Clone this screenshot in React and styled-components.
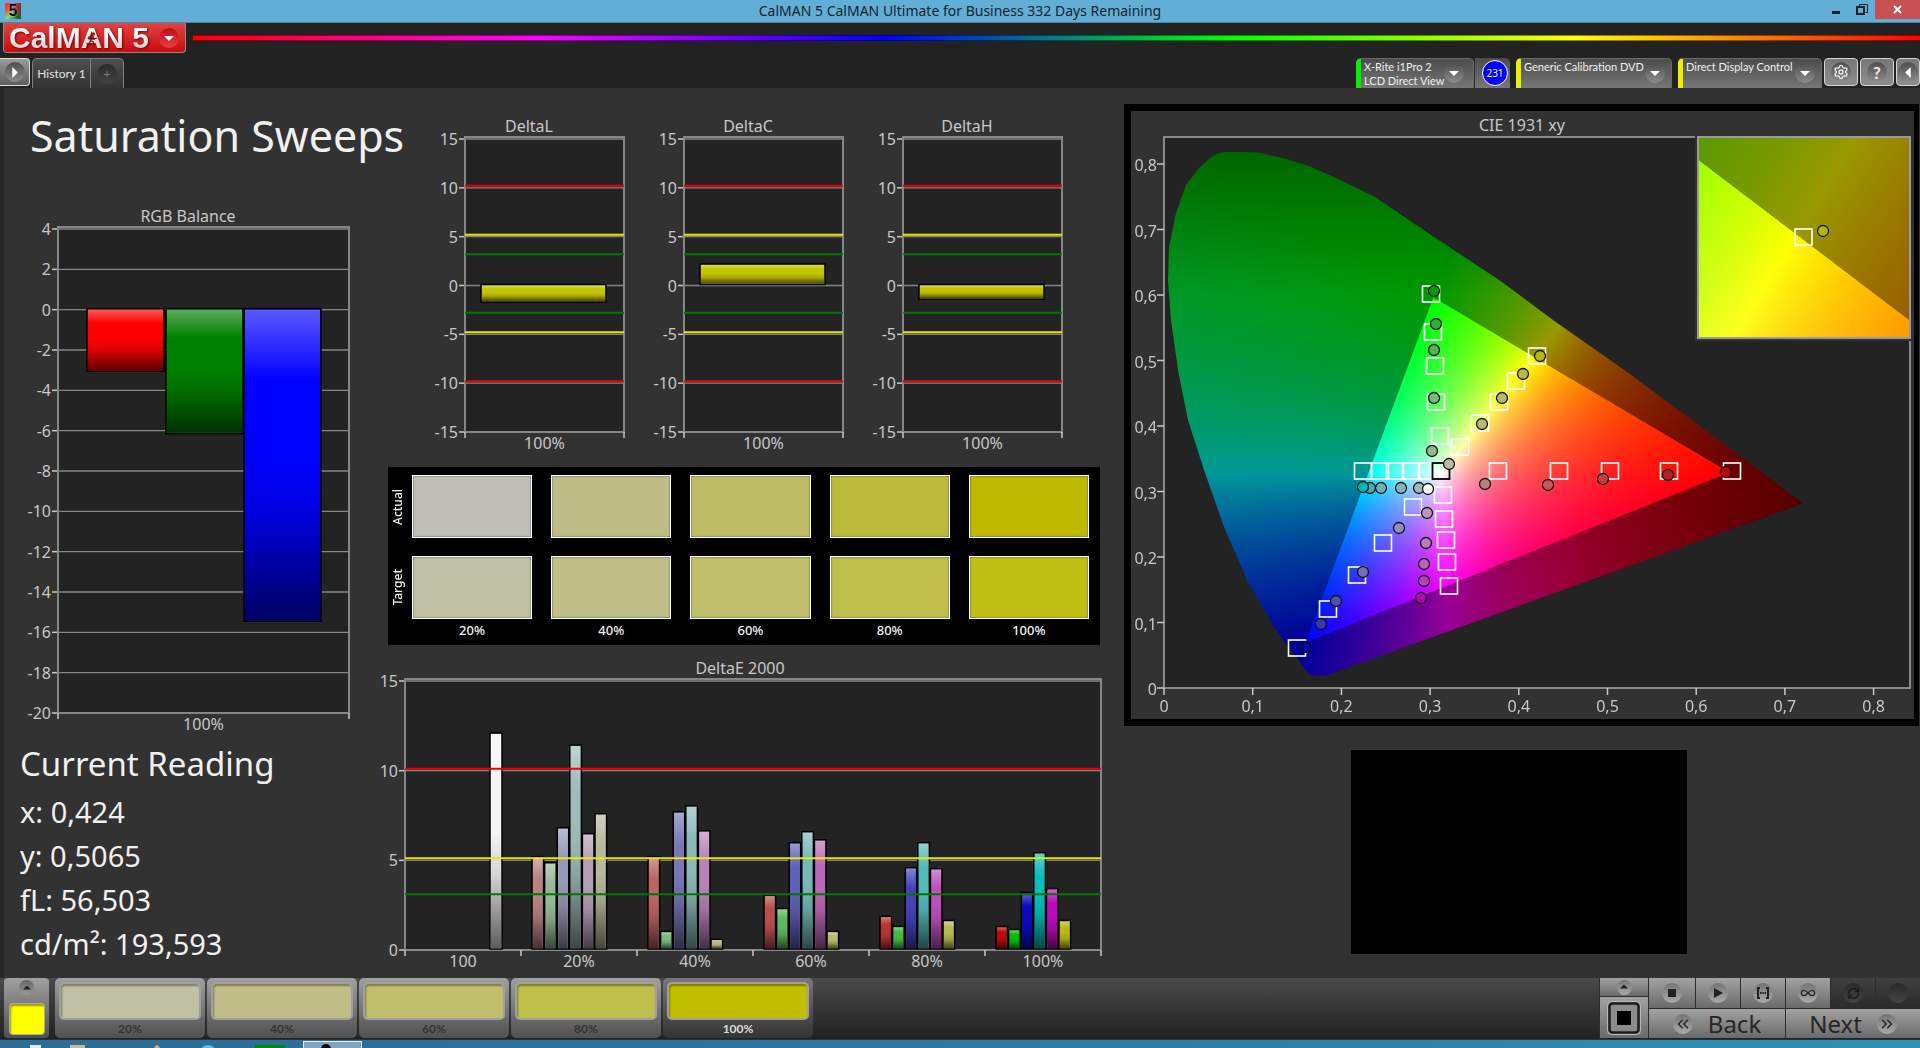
import React, {useEffect, useRef} from 'react';
import styled, {createGlobalStyle} from 'styled-components';
import {ChevronsLeft, ChevronsRight, Infinity as Loop, RefreshCw, Settings} from 'lucide-react';

const GlobalStyle = createGlobalStyle`
  *,
  *::before {
    box-sizing: border-box;
  }

  body {
    margin: 0;
    background: #323232;
    color: #f0f0f0;
    font-family: 'Noto Sans', 'Open Sans', sans-serif;
  }

  button {
    padding: 0;
    border: 0;
    color: inherit;
    font: inherit;
    font-family: Lato, sans-serif;
    cursor: pointer;
  }
`;

const Page = styled.div`
  display: flex;
  flex-direction: column;
  min-height: 100vh;
  overflow: hidden;
`;

/* ---------- window title ---------- */

const TitleBar = styled.div`
  display: grid;
  grid-template-columns: 1fr auto 1fr;
  align-items: center;
  height: 23px;
  background: #61aed6;
  border-bottom: 1px solid #4a87a6;
  color: #16242c;
  font: 14px/22px 'Noto Sans', sans-serif;
`;

const AppIcon = styled.span`
  display: block;
  width: 16px;
  height: 16px;
  margin-left: 5px;
  background: conic-gradient(#e02050, #803020, #206030, #70e080, #ff4030, #e02050);
  color: #000;
  font: bold 16px/16px 'Liberation Sans', sans-serif;
  text-align: center;
  text-shadow: 0 0 2px #fff;
`;

const WindowButtons = styled.div`
  display: flex;
  justify-content: flex-end;
  align-self: start;
`;

const WindowButton = styled.button`
  display: grid;
  place-items: center;
  width: ${({$close}) => ($close ? '45px' : '26px')};
  height: 19px;
  background: ${({$close}) => ($close ? '#c75050' : 'transparent')};
`;

/* ---------- header ---------- */

const Header = styled.header`
  height: 65px;
  background: #222;
`;

const Brand = styled.div`
  display: flex;
  align-items: flex-start;
`;

const Logo = styled.button`
  display: flex;
  flex: none;
  align-items: center;
  gap: 10px;
  width: 183px;
  height: 30px;
  margin-left: 3px;
  padding-left: 5px;
  background: linear-gradient(#e04444, #c80c0c);
  border: 1px solid #8d8d8d;
  border-top: 0;
  border-radius: 0 0 4px 4px;
`;

const Wordmark = styled.span`
  position: relative;
  filter: drop-shadow(1px 1px 1px #7a0000);
`;

const WordmarkText = styled.span`
  background: linear-gradient(#fff 30%, #c4c4c4);
  background-clip: text;
  color: transparent;
  font: bold 30px/28px 'Liberation Sans', sans-serif;
  white-space: nowrap;
`;

const Runner = styled.svg`
  position: absolute;
  left: 77px;
  top: 8px;
`;

const Knob = styled.span`
  display: grid;
  flex: none;
  place-items: center;
  width: 20px;
  height: 20px;
  border-radius: 50%;
  background: ${({$tone}) => $tone || 'linear-gradient(#4e4e4e, #8c8c8c)'};
`;

const Spectrum = styled.div`
  flex: 1;
  height: 6px;
  margin: 12px 0 0 7px;
  background: linear-gradient(90deg, #f00, #f0f 20%, #00f 40%, #0f0 60%, #ff0 80%, #f00);
  border: solid rgba(0, 0, 0, 0.45);
  border-width: 1px 0;
`;

const Bar = styled.div`
  display: flex;
  justify-content: space-between;
  margin-top: 5px;
`;

const Group = styled.div`
  display: flex;
  align-items: flex-start;
`;

const Expander = styled.button`
  display: grid;
  place-items: center;
  width: 30px;
  height: 28px;
  margin-right: 2px;
  background: linear-gradient(#9a9a9a, #5e5e5e);
  border: 1px solid #ddd;
  border-left: 0;
  border-radius: 0 4px 4px 0;
`;

const Tab = styled.button`
  display: grid;
  place-items: center;
  width: ${({$add}) => ($add ? '33px' : '59px')};
  height: 30px;
  background: linear-gradient(#4e4e4e, #333);
  border: solid #808080;
  border-width: ${({$add}) => ($add ? '1px 1px 0 0' : '1px 1px 0 1px')};
  border-radius: ${({$add}) => ($add ? '0 5px 0 0' : '5px 0 0 0')};
  color: ${({$add}) => ($add ? '#808080' : '#e4e4e4')};
  font-size: 12px;
`;

const Device = styled.button`
  display: flex;
  align-items: flex-start;
  justify-content: space-between;
  width: ${({$width}) => $width};
  height: 30px;
  margin-left: 6px;
  padding: 1px ${({$end}) => $end || '6px'} 0 3px;
  background: linear-gradient(#4c4c4c, #777);
  border: 1px solid #6a6a6a;
  border-bottom: 0;
  border-left: 5px solid ${({$status}) => $status};
  border-radius: 5px 5px 0 0;
  font-size: 11px;
  line-height: 14px;
  text-align: left;
  white-space: nowrap;

  ${Knob} {
    margin-top: 3px;
  }
`;

const ReadingCount = styled.span`
  display: grid;
  place-items: center;
  width: 26px;
  height: 26px;
  border: 1px solid #fff;
  border-radius: 50%;
  background: #00f;
  font-size: 10px;
`;

const CountSlot = styled.div`
  width: 36px;
  height: 30px;
  padding: 2px 0 0 7px;
  background: linear-gradient(#4c4c4c, #777);
  border-left: 1px solid #2a2a2a;
  border-radius: 0 5px 0 0;
`;

const Square = styled.button`
  display: grid;
  place-items: center;
  width: ${({$cut}) => ($cut ? '24px' : '34px')};
  height: 28px;
  margin-left: 2px;
  background: linear-gradient(#777, #8e8e8e);
  border: 1px solid #d6d6d6;
  border-radius: 4px;
  font-size: 17px;
  font-weight: bold;
`;

/* ---------- workspace ---------- */

const Workspace = styled.main`
  display: grid;
  flex: 1;
  grid-template-columns: 368fr 752fr 796fr;
  align-items: start;
  border-left: 4px solid #262626;
`;

const Column = styled.section`
  min-width: 0;
`;

const Heading = styled.h1`
  margin: 20px 0 41px 26px;
  font-size: 43px;
  font-weight: 400;
  line-height: 56px;
  white-space: nowrap;
`;

const Reading = styled.div`
  margin: 2px 0 0 16px;
  font-size: 29px;
  line-height: 44px;

  h2 {
    margin: 0 0 4px;
    font-size: 33px;
    font-weight: 400;
    line-height: 44px;
  }

  p {
    margin: 0;
  }
`;

const Chart = styled.svg`
  display: block;
  width: 100%;
  height: auto;
  fill: #c8c8c8;
  font-size: 16px;
`;

const DeltaRow = styled.div`
  display: grid;
  grid-template-columns: repeat(3, 1fr);
  padding: 27px 55px 0 40px;
`;

const Comparison = styled.div`
  display: grid;
  grid-template-columns: 24px 120fr repeat(4, 139fr);
  row-gap: 18px;
  margin: 7px 24px 5px 16px;
  padding: 8px 11px 6px 0;
  background: #000;
`;

const RowName = styled.span`
  place-self: center;
  margin-right: 5px;
  font-size: 12px;
  font-weight: 500;
  line-height: 14px;
  transform: rotate(180deg);
  writing-mode: vertical-rl;
`;

const Patch = styled.div`
  height: 63px;
  margin-left: ${({$first}) => ($first ? '0' : '19px')};
  background: ${({$color}) => $color};
  border: 1px solid #fff;
  box-shadow: inset 0 0 1px 1px rgba(80, 80, 60, 0.35);
`;

const PatchName = styled.span`
  margin: -16px 0 0 ${({$first}) => ($first ? '0' : '19px')};
  font-size: 13px;
  font-weight: 500;
  line-height: 18px;
  text-align: center;
`;

const GamutFrame = styled.div`
  margin: 16px 1px 0 0;
  border: 7px solid #000;
  border-right-width: 5px;
`;

const Gamut = styled.canvas`
  display: block;
  width: 100%;
  height: 100%;
`;

const Preview = styled.div`
  width: 336px;
  height: 204px;
  margin: 24px 233px 0 auto;
  background: #000;
`;

/* ---------- footer ---------- */

const Footer = styled.footer`
  display: flex;
  justify-content: space-between;
  height: 61px;
  padding-left: 4px;
  background: linear-gradient(#4a4a4a, #212121);
`;

const Strip = styled.div`
  display: flex;
  gap: 2px;
`;

const PickedColor = styled.button`
  display: flex;
  flex-direction: column;
  align-items: center;
  justify-content: space-between;
  width: 45px;
  height: 60px;
  margin-right: 4px;
  padding: 2px 0 3px;
  background: linear-gradient(#a0a0a0, #505050);
  border-radius: 4px;

  ${Knob} {
    width: 15px;
    height: 15px;
  }
`;

const Chip = styled.span`
  width: 36px;
  height: 32px;
  background: #ff0;
  border: 1px solid #aaa;
  border-radius: 4px;
  box-shadow: inset 1px 2px 2px rgba(0, 0, 0, 0.4);
`;

const Level = styled.button`
  display: flex;
  flex-direction: column;
  width: 150px;
  height: 60px;
  padding: 4px 4px 0;
  background: ${({$active}) => ($active ? 'linear-gradient(#787878, #333)' : 'linear-gradient(#a0a0a0, #505050)')};
  border-radius: 5px;
  color: ${({$active}) => ($active ? '#ddd' : '#343434')};
  font-size: 12px;
  font-weight: 700;
  text-align: center;

  &::before {
    content: '';
    width: 100%;
    height: 38px;
    background: ${({$color}) => $color};
    border: 2px solid #a0a0a0;
    border-radius: 5px;
    box-shadow: inset 1px 2px 2px rgba(0, 0, 0, 0.35);
  }
`;

const LevelName = styled.span`
  width: 100%;
  line-height: 18px;
`;

const Controls = styled.div`
  display: grid;
  grid-template-columns: 48px 46px repeat(5, 44px);
  grid-template-rows: 30px 29px;
  gap: 1px;
  height: 60px;
  padding-left: 1px;
  background: #2c2c2c;
`;

const Key = styled.button`
  display: flex;
  align-items: center;
  justify-content: center;
  grid-column: span ${({$span}) => $span || 1};
  gap: ${({$span}) => ($span ? '15px' : '0')};
  background: ${({$off}) => ($off ? 'linear-gradient(#404040, #2b2b2b)' : 'linear-gradient(#a2a2a2, #6a6a6a)')};
  color: ${({$off}) => ($off ? '#1c1c1c' : '#262626')};
  font: 24px/28px 'Noto Sans', sans-serif;
`;

const Dial = styled(Knob).attrs(({$off}) => ({
  $tone: $off ? 'linear-gradient(#2a2a2a, #444)' : 'linear-gradient(#747474, #aaa)',
}))``;

const SourceStack = styled.div`
  display: flex;
  flex-direction: column;
  grid-row: span 2;
  gap: 1px;
`;

const SourceKey = styled(Key)`
  flex: ${({$grow}) => ($grow ? 1 : 'none')};
  height: ${({$grow}) => ($grow ? 'auto' : '18px')};

  ${Dial} {
    width: 15px;
    height: 15px;
  }
`;

const TaskBar = styled.div`
  display: flex;
  gap: 13px;
  height: 9px;
  padding-left: 30px;
  overflow: hidden;
  background: linear-gradient(90deg, #2c6c98, #2b73a3 40%, #3090b6);
  border-top: 1px solid #24323c;
`;

const Task = styled.span`
  width: ${({$width}) => $width};
  height: 20px;
  margin: 5px 0 0 ${({$indent}) => $indent || 0};
  background: ${({$color}) => $color};
  border-radius: ${({$round}) => ($round ? '50%' : '0')};
`;

const ActiveTask = styled.span`
  width: 59px;
  height: 20px;
  margin: 1px 0 0 5px;
  padding: 2px 0 0 17px;
  background: #7fa5be;
  border: 1px solid #e8f4ff;

  &::before {
    content: '';
    display: block;
    width: 10px;
    height: 14px;
    background: #120505;
    border-radius: 5px;
  }
`;

/* ---------- bar charts ---------- */

const BarShade = () => (
  <defs>
    <linearGradient id="bar-shade" x1="0" y1="0" x2="0" y2="1">
      <stop offset="0" stopColor="#fff" stopOpacity="0.35" />
      <stop offset="0.23" stopColor="#fff" stopOpacity="0" />
      <stop offset="0.45" stopColor="#000" stopOpacity="0" />
      <stop offset="0.65" stopColor="#000" stopOpacity="0.12" />
      <stop offset="1" stopColor="#000" stopOpacity="0.62" />
    </linearGradient>
  </defs>
);

const limits = [
  {value: 10, color: '#f00000'},
  {value: 5, color: '#e8e800'},
  {value: 3, color: '#007800'},
];

const BarChart = ({title, titleX, size, plot, max, min, step, bars, lines = [], categories}) => {
  const [width, height] = size;
  const bottom = plot.y + plot.h;
  const toY = value => plot.y + 2 + ((max - value) / (max - min)) * (plot.h - 2);
  const slot = plot.w / categories.length;
  const ticks = [];
  for (let v = max; v >= min; v -= step) ticks.push(v);

  return (
    <Chart viewBox={`0 0 ${width} ${height}`} role="img" aria-label={title}>
      <BarShade />
      <text x={titleX} y={plot.y - 5} textAnchor="middle">{title}</text>
      <rect x={plot.x} y={plot.y} width={plot.w} height={plot.h} fill="#232323" />
      {ticks.map(v => (
        <g key={v}>
          <line x1={plot.x} x2={plot.x + plot.w} y1={toY(v)} y2={toY(v)} stroke="#868686" strokeWidth="1.4" />
          <line x1={plot.x - 6} x2={plot.x} y1={toY(v)} y2={toY(v)} stroke="#c8c8c8" strokeWidth="1.5" />
          <text x={plot.x - 7} y={toY(v) + 6} textAnchor="end">{v}</text>
        </g>
      ))}
      <rect x={plot.x} y={plot.y} width={plot.w} height={plot.h} fill="none" stroke="#868686" strokeWidth="2" />
      {bars.map(({x, w, value, color}) => {
        const y = toY(Math.max(0, value)) - 1;
        const h = Math.abs(toY(value) - toY(0));
        return (
          <g key={x}>
            <rect x={x} y={y} width={w} height={h} fill={color} stroke="#000" strokeWidth="1.5" />
            <rect x={x + 1} y={y + 1} width={w - 2} height={Math.max(h - 2, 1)} fill="url(#bar-shade)" />
          </g>
        );
      })}
      {lines.map(({value, color}) => (
        <line key={value} x1={plot.x} x2={plot.x + plot.w} y1={toY(value) - 2} y2={toY(value) - 2} stroke={color} strokeWidth="2" />
      ))}
      {categories.map((name, i) => (
        <text key={name} x={plot.x + slot * (i + 0.5)} y={bottom + 17} textAnchor="middle">{name}</text>
      ))}
      {[...categories, ''].map((name, i) => (
        <line key={name} x1={plot.x + slot * i} x2={plot.x + slot * i} y1={bottom} y2={bottom + 6} stroke="#c8c8c8" strokeWidth="1.5" />
      ))}
    </Chart>
  );
};

const rgbBars = [
  {x: 83, w: 77, value: -3.1, color: '#ff0000'},
  {x: 162, w: 77, value: -6.2, color: '#008000'},
  {x: 240, w: 77, value: -15.5, color: '#0000ff'},
];

const deltas = [
  {title: 'DeltaL', value: -1.8},
  {title: 'DeltaC', value: 2.1},
  {title: 'DeltaH', value: -1.5},
];

const deltaE = [
  {
    values: [5.15, 4.81, 6.76, 11.37, 6.43, 7.54],
    colors: ['#b98383', '#98b898', '#9898b9', '#9fb8b8', '#b89fb8', '#b8b89b'],
  },
  {
    values: [5.15, 0.98, 7.65, 7.98, 6.59, 0.54],
    colors: ['#bb6464', '#7cb87c', '#7878b9', '#8cb8b8', '#b983b9', '#b9b985'],
  },
  {
    values: [3, 2.26, 5.93, 6.54, 6.09, 0.98],
    colors: ['#ba4d4d', '#5fb95f', '#6060b9', '#76b9b9', '#ba69b9', '#b9b96b'],
  },
  {
    values: [1.83, 1.26, 4.54, 5.93, 4.48, 1.59],
    colors: ['#bb3434', '#45b945', '#4444b9', '#56b9b9', '#ba50ba', '#b9b950'],
  },
  {
    values: [1.26, 1.09, 3.15, 5.37, 3.37, 1.59],
    colors: ['#bb0a0a', '#0abb0a', '#0a0abb', '#0abbbb', '#bb0abb', '#b9b910'],
  },
];

const deltaEBars = [
  {x: 118, w: 12, value: 12.04, color: '#f4f4f6'},
  ...deltaE.flatMap(({values, colors}, group) =>
    values.map((value, i) => ({x: 160 + group * 116 + i * 12.6, w: 11.6, value, color: colors[i]}))
  ),
];

/* ---------- chromaticity diagram ---------- */

const primaries = [[0.637, 0.3295], [0.3034, 0.5967], [0.1595, 0.07]];
const white = [0.3127, 0.329];

const det = (a, b, c) =>
  a[0] * (b[1] * c[2] - b[2] * c[1]) - b[0] * (a[1] * c[2] - a[2] * c[1]) + c[0] * (a[1] * b[2] - a[2] * b[1]);

const solve = ([r, g, b], v) => {
  const d = det(r, g, b);
  return [det(v, g, b) / d, det(r, v, b) / d, det(r, g, v) / d];
};

const toVector = ([x, y]) => [x, y, 1 - x - y];
const vectors = primaries.map(toVector);
const whiteWeights = solve(vectors, toVector(white));

const clamp = v => Math.min(1, Math.max(0, v));

// full brightness inside the triangle, dimmed towards the ends of the locus
const colorAt = (x, y) => {
  const rgb = solve(vectors, [x, y, 1 - x - y]).map((v, i) => v / whiteWeights[i]);
  const outside = rgb.some(v => v < 0);
  const top = Math.max(...rgb);
  const dim = outside ? 0.6 - 0.27 * clamp((x - 0.45) / 0.27) - 0.2 * clamp((y - 0.6) / 0.22) : 1;
  return rgb.map(v => 255 * dim * clamp(v / top));
};

const locus = 'M146 538.5 L132 520 L124 510 L109 488 L83 443 L60 390 L40 333 L24 283 L14.5 236 L7 183 L4 143 ' +
  'L5 110 L12 76 L22 48 L35 31 L44 23 Q52 15.5 62 15 L76 15 L94 15.5 L119 21 L145 29 L170 40 L211 60 L264 96 ' +
  'L338 145 L389 183 L466 237 L540 292 L639 366.5 L162 538.5 Z';

const paint = (canvas, {x0, x1, y0, y1, outline}) => {
  const {width, height} = canvas;
  const ctx = canvas.getContext('2d');
  const image = ctx.createImageData(width, height);
  for (let row = 0; row < height; row += 1) {
    for (let col = 0; col < width; col += 1) {
      const [r, g, b] = colorAt(x0 + ((x1 - x0) * col) / width, y1 - ((y1 - y0) * row) / height);
      const at = (row * width + col) * 4;
      image.data[at] = r;
      image.data[at + 1] = g;
      image.data[at + 2] = b;
      image.data[at + 3] = 255;
    }
  }
  ctx.putImageData(image, 0, 0);
  if (outline) {
    ctx.globalCompositeOperation = 'destination-in';
    ctx.setTransform(2, 0, 0, 2, 0, 0);
    ctx.fill(new Path2D(outline));
  }
};

const GamutCanvas = ({width, height, area}) => {
  const ref = useRef(null);

  useEffect(() => {
    paint(ref.current, area);
  }, [area]);

  return <Gamut ref={ref} width={width * 2} height={height * 2} />;
};

const fullArea = {x0: 0, x1: 746 / 887, y0: 0, y1: 551 / 655, outline: locus};
const zoomArea = {x0: 0.3847, x1: 0.4547, y0: 0.4695, y1: 0.5395};

const targets = [
  [267, 157], [269, 195], [271, 229], [272, 265], [276, 299],
  [373, 219], [352, 244], [335, 265], [316, 286], [296, 310],
  [199, 334], [216, 334], [231, 334], [247, 334], [263, 334],
  [334, 334], [395, 334], [446, 334], [505, 334], [568, 334],
  [249, 370], [219, 406], [193, 438], [164, 472], [133, 511],
  [279, 358], [280, 382], [282, 403], [283, 425], [285, 449],
];

const readings = [
  [270, 154, '#00a000'], [272, 187, '#3aa83a'], [270, 213, '#58b058'], [270, 261, '#78b878'], [268, 314, '#94b894'],
  [376, 219, '#b8b800'], [359, 237, '#b8b848'], [338, 261, '#b8b868'], [318, 287, '#b8b880'], [285, 327, '#b8b8a0'],
  [206, 351, '#40b0b0'], [199, 350, '#00b8b8'], [217, 351, '#68b4b4'], [237, 351, '#80b8b8'], [255, 351, '#a0b8b8'],
  [264, 352, '#ffffff'],
  [321, 347, '#b88080'], [384, 348, '#c05858'], [439, 342, '#c04040'], [504, 338, '#b82020'], [562, 335, '#c00000'],
  [235, 391, '#9090b8'], [199, 435, '#7070b8'], [172, 464, '#5050b0'], [157, 487, '#3838b0'], [141, 510, '#0000a8'],
  [263, 376, '#b898b8'], [262, 406, '#b880b8'], [260, 427, '#b860b8'], [260, 444, '#b840b8'], [257, 461, '#b800b8'],
];

const tenths = [0, 1, 2, 3, 4, 5, 6, 7, 8];
const decimal = n => (n ? `0,${n}` : '0');

const GamutChart = () => (
  <Chart viewBox="0 0 783 608" role="img" aria-label="CIE 1931 xy">
    <text x="391" y="20" textAnchor="middle">CIE 1931 xy</text>
    <g transform="translate(33 26)">
      <rect width="746" height="551" fill="#232323" stroke="#8a8a8a" strokeWidth="2" />
      <foreignObject width="746" height="551">
        <GamutCanvas width={746} height={551} area={fullArea} />
      </foreignObject>
      {tenths.map(n => (
        <g key={n} stroke="#c8c8c8" strokeWidth="1.5">
          <line x1={n * 88.7} x2={n * 88.7} y1="551" y2="558" />
          <line x1="-7" x2="0" y1={551 - n * 65.5} y2={551 - n * 65.5} />
        </g>
      ))}
      {tenths.map(n => (
        <g key={n}>
          <text x={n * 88.7} y="575" textAnchor="middle">{decimal(n)}</text>
          <text x="-7" y={558 - n * 65.5} textAnchor="end">{decimal(n)}</text>
        </g>
      ))}
      {targets.map(([x, y]) => (
        <rect key={`${x}-${y}`} x={x - 8.5} y={y - 8} width="17" height="16" fill="none" stroke="#fff" strokeWidth="1.6" />
      ))}
      <rect x="268.5" y="326" width="17" height="16" fill="none" stroke="#000" strokeWidth="1.8" />
      {readings.map(([x, y, color]) => (
        <circle key={`${x}-${y}`} cx={x} cy={y} r="5.5" fill={color} stroke="#111" strokeWidth="1.3" />
      ))}
      <rect x="531" y="-2" width="217" height="206" fill="#323232" />
      <foreignObject x="534" y="0" width="212" height="201">
        <GamutCanvas width={212} height={201} area={zoomArea} />
      </foreignObject>
      <rect x="534" y="0" width="212" height="201" fill="none" stroke="#9a9a9a" strokeWidth="2" />
      <rect x="631" y="92" width="17" height="16" fill="none" stroke="#fff" strokeWidth="1.6" />
      <circle cx="659" cy="94" r="5.5" fill="#b8b800" stroke="#111" strokeWidth="1.3" />
    </g>
  </Chart>
);

/* ---------- page ---------- */

const levels = [
  {name: '20%', actual: '#bfbfb6', target: '#c0c0a4'},
  {name: '40%', actual: '#bfbd87', target: '#c0bf88'},
  {name: '60%', actual: '#bdbd65', target: '#bfbf6c'},
  {name: '80%', actual: '#bcbb3e', target: '#bfbf4c'},
  {name: '100%', actual: '#bdb900', target: '#bfbf14'},
];

const Triangle = ({points, size = 10, color = '#fff'}) => (
  <svg width={size} height={size} viewBox="0 0 10 10" fill={color}>
    <polygon points={points} />
  </svg>
);

const DOWN = '0,3 10,3 5,8';
const UP = '0,7 10,7 5,2';
const RIGHT = '3,0 8,5 3,10';
const LEFT = '7,0 2,5 7,10';

const App = () => (
  <Page>
    <GlobalStyle />
    <TitleBar>
      <AppIcon>5</AppIcon>
      <span>CalMAN 5 CalMAN Ultimate for Business 332 Days Remaining</span>
      <WindowButtons>
        <WindowButton aria-label="Minimize">
          <svg width="10" height="10"><rect x="1" y="6" width="8" height="3" fill="#222" /></svg>
        </WindowButton>
        <WindowButton aria-label="Restore">
          <svg width="12" height="12" fill="none" stroke="#222">
            <path d="M3.5 2.5V.5h8v8h-2" />
            <rect x="1" y="3" width="7" height="7" strokeWidth="2" />
          </svg>
        </WindowButton>
        <WindowButton $close aria-label="Close">
          <svg width="9" height="9" stroke="#fff" strokeWidth="2"><path d="M1 1l7 7M8 1l-7 7" /></svg>
        </WindowButton>
      </WindowButtons>
    </TitleBar>

    <Header>
      <Brand>
        <Logo aria-label="CalMAN 5 menu">
          <Wordmark>
            <WordmarkText>CalMAN 5</WordmarkText>
            <Runner width="12" height="15" viewBox="0 0 12 15" fill="none" stroke="#8c1414" strokeWidth="1.3">
              <circle cx="7.5" cy="2" r="1" />
              <path d="M6.5 4 4.5 8.5 7.5 10 6 13.5M4.5 8.5 3.5 11 0.5 12M6.5 4.5 3 5 2 7M6.5 4.5 8.5 7 11 6" />
            </Runner>
          </Wordmark>
          <Knob $tone="linear-gradient(#c00c18, #e84040)"><Triangle points={DOWN} /></Knob>
        </Logo>
        <Spectrum />
      </Brand>
      <Bar>
        <Group>
          <Expander aria-label="Expand panel"><Knob><Triangle points={RIGHT} size={11} /></Knob></Expander>
          <Tab>History 1</Tab>
          <Tab $add aria-label="Add history"><Knob $tone="linear-gradient(#2b2b2b, #444)">+</Knob></Tab>
        </Group>
        <Group>
          <Device $status="#00f000" $width="118px" $end="9px">
            <span>X-Rite i1Pro 2<br />LCD Direct View</span>
            <Knob><Triangle points={DOWN} /></Knob>
          </Device>
          <CountSlot><ReadingCount>231</ReadingCount></CountSlot>
          <Device $status="#eeee00" $width="156px">
            Generic Calibration DVD
            <Knob><Triangle points={DOWN} /></Knob>
          </Device>
          <Device $status="#eeee00" $width="144px">
            Direct Display Control
            <Knob><Triangle points={DOWN} /></Knob>
          </Device>
          <Square aria-label="Settings"><Knob><Settings size={16} /></Knob></Square>
          <Square aria-label="Help"><Knob>?</Knob></Square>
          <Square $cut aria-label="Collapse panel"><Knob><Triangle points={LEFT} size={11} /></Knob></Square>
        </Group>
      </Bar>
    </Header>

    <Workspace>
      <Column>
        <Heading>Saturation Sweeps</Heading>
        <BarChart
          title="RGB Balance"
          titleX={184}
          size={[368, 535]}
          plot={{x: 54, y: 22, w: 291, h: 486}}
          max={4}
          min={-20}
          step={2}
          bars={rgbBars}
          categories={['100%']}
        />
        <Reading>
          <h2>Current Reading</h2>
          <p>x: 0,424</p>
          <p>y: 0,5065</p>
          <p>fL: 56,503</p>
          <p>cd/m²: 193,593</p>
        </Reading>
      </Column>

      <Column>
        <DeltaRow>
          {deltas.map(({title, value}) => (
            <BarChart
              key={title}
              title={title}
              titleX={117}
              size={[219, 345]}
              plot={{x: 53, y: 22, w: 159, h: 295}}
              max={15}
              min={-15}
              step={5}
              bars={[{x: 69, w: 125, value, color: '#c4c400'}]}
              lines={[...limits, ...limits.map(l => ({...l, value: -l.value}))]}
              categories={['100%']}
            />
          ))}
        </DeltaRow>
        <Comparison>
          <RowName>Actual</RowName>
          {levels.map(({name, actual}, i) => <Patch key={name} $color={actual} $first={i === 0} />)}
          <RowName>Target</RowName>
          {levels.map(({name, target}, i) => <Patch key={name} $color={target} $first={i === 0} />)}
          <span />
          {levels.map(({name}, i) => <PatchName key={name} $first={i === 0}>{name}</PatchName>)}
        </Comparison>
        <BarChart
          title="DeltaE 2000"
          titleX={368}
          size={[752, 322]}
          plot={{x: 33, y: 29, w: 696, h: 271}}
          max={15}
          min={0}
          step={5}
          bars={deltaEBars}
          lines={limits}
          categories={['100', '20%', '40%', '60%', '80%', '100%']}
        />
      </Column>

      <Column>
        <GamutFrame><GamutChart /></GamutFrame>
        <Preview />
      </Column>
    </Workspace>

    <Footer>
      <Strip>
        <PickedColor aria-label="Selected color">
          <Knob $tone="linear-gradient(#666, #999)"><Triangle points={UP} size={8} color="#222" /></Knob>
          <Chip />
        </PickedColor>
        {levels.map(({name, target}, i) => (
          <Level key={name} $color={i === 4 ? '#bfbf00' : target} $active={i === 4}>
            <LevelName>{name}</LevelName>
          </Level>
        ))}
      </Strip>
      <Controls>
        <SourceStack>
          <SourceKey aria-label="Show sources"><Dial><Triangle points={UP} size={8} color="#222" /></Dial></SourceKey>
          <SourceKey $grow aria-label="Source window">
            <svg width="34" height="34" viewBox="0 0 34 34">
              <rect x="0.5" y="0.5" width="33" height="33" rx="4" fill="#8c8c8c" stroke="#b8b8b8" />
              <rect x="2.5" y="2.5" width="29" height="29" rx="3" fill="none" stroke="#1c1c1c" strokeWidth="2.5" />
              <rect x="10" y="10" width="14" height="14" fill="#000" />
            </svg>
          </SourceKey>
        </SourceStack>
        <Key aria-label="Stop"><Dial><svg width="8" height="8"><rect width="8" height="8" fill="#222" /></svg></Dial></Key>
        <Key aria-label="Play"><Dial><Triangle points="1,0 10,5 1,10" color="#222" /></Dial></Key>
        <Key aria-label="Read series">
          <Dial>
            <svg width="14" height="12" fill="none" stroke="#222" strokeWidth="2">
              <path d="M4 1H2v10h2M10 1h2v10h-2M4 6h1.5M6.3 6h1.5M8.6 6h1.5" />
            </svg>
          </Dial>
        </Key>
        <Key aria-label="Read continuously"><Dial><Loop size={16} /></Dial></Key>
        <Key $off aria-label="Refresh"><Dial $off><RefreshCw size={13} strokeWidth={3} /></Dial></Key>
        <Key $off aria-label="Record"><Dial $off /></Key>
        <Key $span={3}><Dial><ChevronsLeft size={18} /></Dial>Back</Key>
        <Key $span={3}>Next<Dial><ChevronsRight size={18} /></Dial></Key>
      </Controls>
    </Footer>
    <TaskBar>
      <Task $width="11px" $color="#dfeaf2" />
      <Task $width="15px" $color="#cdb98a" $indent="16px" />
      <Task $width="8px" $color="#e0a878" $indent="55px" $round />
      <Task $width="18px" $color="#5cc0ea" $indent="25px" $round />
      <Task $width="30px" $color="#008c00" $indent="25px" />
      <ActiveTask />
    </TaskBar>
  </Page>
);

export default App;
